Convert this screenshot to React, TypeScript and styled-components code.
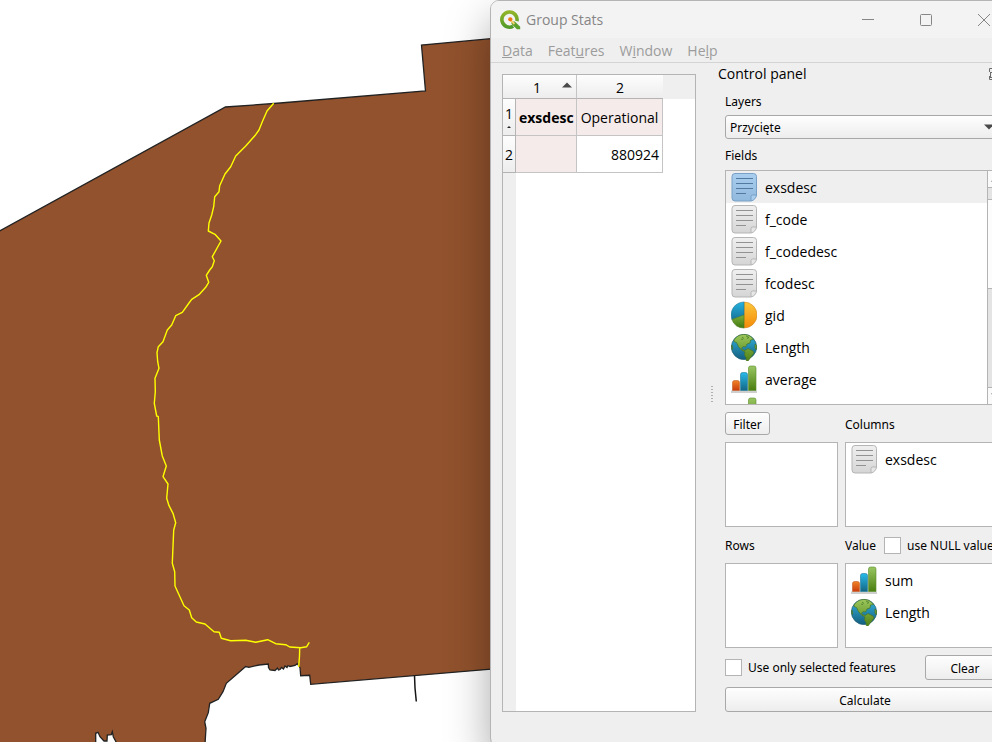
import React from "react";
import styled, { createGlobalStyle, css } from "styled-components";

const GlobalStyle = createGlobalStyle`
  *, *::before, *::after { box-sizing: border-box; }
  body {
    margin: 0;
    overflow: hidden;
    background: #fff;
    color: #000;
    font-family: "Open Sans", "Noto Sans", sans-serif;
    font-size: 14px;
    line-height: 20px;
  }
  ul { list-style: none; margin: 0; padding: 0; }
  button, select, input { font: inherit; color: inherit; margin: 0; }
`;

const frame = "1px solid #b4b4b4";

const smallText = css`
  font-family: "Noto Sans", "Open Sans", sans-serif;
  font-size: 12px;
  line-height: 16px;
`;

const raised = css`
  border: 1px solid #a8a8a8;
  border-radius: 3px;
  background: linear-gradient(#fefefe, #ededed);
`;

const Desktop = styled.div`
  display: flex;
  height: 100vh;
  overflow: hidden;
`;

const MapPane = styled.main`
  flex: 1;
  min-width: 0;
  margin-right: -1px;
`;

const MapDrawing = styled.svg`
  display: block;
  width: 100%;
  height: 100%;
`;

const Dialog = styled.section`
  flex: 0 0 524px;
  z-index: 1;
  display: flex;
  flex-direction: column;
  margin: 0 -22px -5px 0;
  border: 1px solid #b4b4b4;
  border-radius: 9px;
  overflow: hidden;
  background: #efefef;
  box-shadow: 0 20px 44px rgba(0, 0, 0, 0.34);
`;

const TitleBar = styled.header`
  display: flex;
  align-items: center;
  height: 37px;
  padding-left: 9px;
  gap: 5px;
  background: #f3f3f3;
  color: #868686;
`;

const Title = styled.h1`
  flex: 1;
  margin: 0;
  font-size: 14px;
  font-weight: 400;
`;

const WindowControls = styled.div`
  display: flex;
`;

const WindowButton = styled.button`
  display: grid;
  place-items: center;
  width: 58px;
  height: 36px;
  padding: 0;
  border: 0;
  background: none;
`;

const MenuBar = styled.nav`
  display: flex;
  gap: 15px;
  height: 25px;
  padding: 2px 11px 0;
  border-bottom: 1px solid #d4d4d4;
`;

const MenuItem = styled.button`
  padding: 0;
  border: 0;
  background: none;
  color: #9c9c9c;
`;

const Body = styled.div`
  flex: 1;
  min-height: 0;
  display: flex;
  padding-bottom: 34px;
`;

const ResultFrame = styled.div`
  flex: 0 0 194px;
  margin: 11px 0 0 11px;
  border: ${frame};
  background: linear-gradient(#efefef, #efefef) 0 0 / 13px 100% no-repeat,
    linear-gradient(#efefef, #efefef) 0 0 / 100% 24px no-repeat, #fff;
`;

const ResultTable = styled.table`
  table-layout: fixed;
  width: 160px;
  border-collapse: separate;
  border-spacing: 0;
`;

const Col = styled.col<{ $w: number }>`
  width: ${(p) => p.$w}px;
`;

const HeadCell = styled.th`
  height: 24px;
  padding: 2px 0 0;
  border-right: 1px solid #c4c4c4;
  border-bottom: 1px solid #b4b4b4;
  background: linear-gradient(#fdfdfd, #ededed);
  font-weight: 400;
  &:first-child, &:last-child { border-right: 0; }
`;

const SortHead = styled.div`
  display: grid;
  grid-template-columns: 1fr 18px;
  align-items: center;
  svg { justify-self: center; margin-bottom: 6px; }
`;

const RowHead = styled.th`
  height: 37px;
  padding: 2px 0 0;
  border-right: 1px solid #b4b4b4;
  border-bottom: 1px solid #b4b4b4;
  background: linear-gradient(#fdfdfd, #ededed);
  font-weight: 400;
  line-height: 20px;
`;

const RowSort = styled.svg`
  display: block;
  margin: 2px auto 4px;
`;

const Cell = styled.td<{ $tint?: boolean; $bold?: boolean; $right?: boolean }>`
  height: 37px;
  padding: 2px 3px 0;
  border-right: 1px solid #c4c4c4;
  border-bottom: 1px solid #c4c4c4;
  background: ${(p) => (p.$tint ? "#f5ebea" : "#fff")};
  font-weight: ${(p) => (p.$bold ? 700 : 400)};
  text-align: ${(p) => (p.$right ? "right" : "center")};
  white-space: nowrap;
`;

const Splitter = styled.div`
  flex: 0 0 22px;
  display: flex;
  justify-content: flex-end;
  align-items: center;
  padding: 14px 5px 0 0;
`;

const Dock = styled.aside`
  flex: 1;
  min-width: 0;
  display: flex;
  flex-direction: column;
`;

const DockTitle = styled.div`
  display: flex;
  justify-content: space-between;
  align-items: center;
  height: 22px;
  padding-right: 12px;
`;

const DockHeading = styled.h2`
  margin: 0;
  font-size: 14px;
  font-weight: 400;
`;

const Controls = styled.form`
  display: flex;
  flex-direction: column;
  padding: 0 8px 0 7px;
  ${smallText}
`;

const FieldLabel = styled.label`
  display: block;
  margin: 10px 0 5px;
`;

const ListLabel = styled.span`
  display: block;
  margin: 9px 0 6px;
`;

const SelectBox = styled.div`
  display: grid;
  align-items: center;
  > * { grid-area: 1 / 1; }
  svg { justify-self: end; margin-right: 11px; pointer-events: none; }
`;

const LayerSelect = styled.select`
  ${raised}
  appearance: none;
  height: 24px;
  padding: 2px 4px 0;
`;

const FieldsFrame = styled.div`
  display: flex;
  height: 235px;
  border: ${frame};
  background: #fff;
`;

const FieldList = styled.ul`
  flex: 1;
  overflow: hidden;
`;

const ListItem = styled.li<{ $selected?: boolean }>`
  display: flex;
  align-items: center;
  gap: 8px;
  height: 32px;
  padding-left: 5px;
  background: ${(p) => (p.$selected ? "#efefef" : "transparent")};
  font-family: "Open Sans", "Noto Sans", sans-serif;
  font-size: 14px;
  line-height: 20px;
  svg { flex: none; }
`;

const Caption = styled.span`
  padding-top: 2px;
`;

const ScrollBar = styled.div`
  flex: 0 0 17px;
  display: flex;
  flex-direction: column;
  border-left: 1px solid #b4b4b4;
  background: #e4e4e4;
`;

const ScrollArrow = styled.span`
  flex: 0 0 16px;
  display: grid;
  place-items: center;
  background: #fafafa;
`;

const ScrollTrack = styled.div`
  flex: 1;
  padding-top: 11px;
  border: solid #b4b4b4;
  border-width: 1px 0;
`;

const ScrollThumb = styled.div`
  height: 90px;
  border: solid #b4b4b4;
  border-width: 1px 0;
  background: #fcfcfc;
`;

const DropGrid = styled.div`
  display: grid;
  grid-template-columns: 113px 1fr;
  column-gap: 7px;
`;

const DropHead = styled.div<{ $h: number }>`
  display: flex;
  align-items: center;
  gap: 8px;
  height: ${(p) => p.$h}px;
  white-space: nowrap;
`;

const DropList = styled.ul`
  height: 85px;
  border: ${frame};
  background: #fff;
`;

const Button = styled.button<{ $w?: number; $h: number }>`
  ${raised}
  width: ${(p) => (p.$w ? `${p.$w}px` : "100%")};
  height: ${(p) => p.$h}px;
  padding: 2px 0 0;
`;

const CheckLabel = styled.label`
  display: flex;
  align-items: center;
  gap: 6px;
`;

const Check = styled.input`
  appearance: none;
  flex: none;
  width: 17px;
  height: 17px;
  border: 1px solid #b4b4b4;
  background: #fff;
`;

const ActionRow = styled.div`
  display: flex;
  justify-content: space-between;
  align-items: center;
  margin: 7px 0;
`;

function Arrow({ up }: { up?: boolean }) {
  return (
    <svg width="10" height="6" viewBox="0 0 10 6" aria-hidden="true">
      <path d={up ? "M0 5.5 5 .5l5 5z" : "M0 .5h10l-5 5z"} fill="#4a4a4a" />
    </svg>
  );
}

function Logo() {
  return (
    <svg width="21" height="20" viewBox="0 0 21 20" aria-hidden="true">
      <defs>
        <linearGradient id="logo" x2="0" y2="1">
          <stop offset="0" stopColor="#91b52a" />
          <stop offset="1" stopColor="#529b2b" />
        </linearGradient>
      </defs>
      <path
        d="M13.2 16.2A7.600 7.600 0 1 1 16.900 11.200"
        fill="none"
        stroke="url(#logo)"
        strokeWidth="3.600"
      />
      <path d="M11.500 11.500h3.300l5.400 5.300v2.400h-3.300l-5.400-5.200z" fill="#5c9f2b" />
      <path d="m10.800 10.300 3.700 3.700" stroke="#f7d06c" strokeWidth="1.800" />
      <circle cx="10.300" cy="9.300" r="2.100" fill="#ee7913" />
    </svg>
  );
}

function PageIcon({ blue }: { blue?: boolean }) {
  const id = blue ? "page-blue" : "page-grey";
  const edge = blue ? "#78a0c6" : "#b5b5b5";
  return (
    <svg width="26" height="30" viewBox="0 0 26 30" aria-hidden="true">
      <defs>
        <linearGradient id={id} x2="0" y2="1">
          <stop offset="0" stopColor={blue ? "#a9ceee" : "#f0f0f0"} />
          <stop offset="1" stopColor={blue ? "#91b9dd" : "#d5d5d5"} />
        </linearGradient>
      </defs>
      <path
        d="M4 1.500h18.500a3 3 0 0 1 3 3V23l-5.500 6H4a3 3 0 0 1-3-3V4.500a3 3 0 0 1 3-3z"
        fill={`url(#${id})`}
        stroke={edge}
      />
      <path
        d="M20 29v-4.500a1.500 1.500 0 0 1 1.500-1.500h4c0 2.500-2.500 5.500-5.500 6z"
        fill={blue ? "#a9ceee" : "#e6e6e6"}
        stroke={edge}
      />
      <path
        d="M5 6.500h17M5 11.500h17M5 16.500h17M5 21.500h10"
        stroke={blue ? "#52799f" : "#929292"}
      />
    </svg>
  );
}

function PieIcon() {
  return (
    <svg width="26" height="28" viewBox="0 0 26 28" aria-hidden="true">
      <defs>
        <linearGradient id="pie-o" x2="0" y2="1">
          <stop offset="0" stopColor="#fbc73c" />
          <stop offset="1" stopColor="#f58a07" />
        </linearGradient>
        <linearGradient id="pie-b" x2="0" y2="1">
          <stop offset="0" stopColor="#25b3e0" />
          <stop offset="1" stopColor="#16739a" />
        </linearGradient>
        <linearGradient id="pie-g" x2="0" y2="1">
          <stop offset="0" stopColor="#7eaf3c" />
          <stop offset="1" stopColor="#41780f" />
        </linearGradient>
      </defs>
      <path d="M13 1a13 13 0 0 1 0 26z" fill="url(#pie-o)" stroke="#d08a25" strokeWidth=".6" />
      <path d="M13 14 .9 18.500A13 13 0 0 1 13 1z" fill="url(#pie-b)" stroke="#1d7596" strokeWidth=".6" />
      <path d="M13 14v13A13 13 0 0 1 .9 18.500z" fill="url(#pie-g)" stroke="#4c7a22" strokeWidth=".6" />
    </svg>
  );
}

function GlobeIcon() {
  return (
    <svg width="26" height="28" viewBox="0 0 26 28" aria-hidden="true">
      <defs>
        <linearGradient id="sea" x2="0" y2="1">
          <stop offset="0" stopColor="#35b3dd" />
          <stop offset="1" stopColor="#125f7f" />
        </linearGradient>
        <linearGradient id="land" x2="0" y2="1">
          <stop offset="0" stopColor="#9cc75c" />
          <stop offset="1" stopColor="#4d8013" />
        </linearGradient>
      </defs>
      <circle cx="13" cy="14" r="12.600" fill="url(#sea)" stroke="#235f73" strokeWidth=".7" />
      <path
        d="M3 7C6 2.500 10 1.300 14 1.500c4 .2 7 2.500 8.500 5l-3 .5-.5 3-3 1-1.500 3-2-.5-2 1.500 1 1.500 2.500 1 3-2 5 2.500 1 2-3 4-3 4-1.500.5-.5-4-1.500-2.500.5-3-3.500-2-3-3.500-2-4L3 8.500zM24 11l1.500 1.500v4l-1.500-1zM.7 12l1 3-.7 1.500z"
        fill="url(#land)"
        stroke="#477426"
        strokeWidth=".7"
      />
      <path d="m11 4 2 1.500M15 3l3 1.500-2 1M10 6l2 .5" stroke="#588a30" fill="none" />
    </svg>
  );
}

function BarsIcon() {
  return (
    <svg width="26" height="28" viewBox="0 0 26 28" aria-hidden="true">
      <defs>
        <linearGradient id="bar-r" x2="0" y2="1">
          <stop offset="0" stopColor="#f18427" />
          <stop offset="1" stopColor="#c93c0d" />
        </linearGradient>
        <linearGradient id="bar-b" x2="0" y2="1">
          <stop offset="0" stopColor="#27bbe9" />
          <stop offset="1" stopColor="#146685" />
        </linearGradient>
        <linearGradient id="bar-g" x2="0" y2="1">
          <stop offset="0" stopColor="#99c662" />
          <stop offset="1" stopColor="#4a7e10" />
        </linearGradient>
      </defs>
      <path d="M0 25.500h26V28H0z" fill="#cfcfcf" />
      <path d="M1.500 25.500v-8q0-2 2-2h3q2 0 2 2v8z" fill="url(#bar-r)" stroke="#c05c26" strokeWidth=".6" />
      <path d="M9.500 25.500V9.500q0-2 2-2h3q2 0 2 2v16z" fill="url(#bar-b)" stroke="#1b7798" strokeWidth=".6" />
      <path d="M17.500 25.500V3q0-2 2-2h3.500q2 0 2 2v22.500z" fill="url(#bar-g)" stroke="#598b29" strokeWidth=".6" />
    </svg>
  );
}

type IconKind = "page" | "page-blue" | "pie" | "globe" | "bars";

function FieldIcon({ kind }: { kind: IconKind }) {
  if (kind === "pie") return <PieIcon />;
  if (kind === "globe") return <GlobeIcon />;
  if (kind === "bars") return <BarsIcon />;
  return <PageIcon blue={kind === "page-blue"} />;
}

function FieldItem({ icon, name, selected }: { icon: IconKind; name: string; selected?: boolean }) {
  return (
    <ListItem $selected={selected}>
      <FieldIcon kind={icon} />
      <Caption>{name}</Caption>
    </ListItem>
  );
}

const fields: { name: string; icon: IconKind }[] = [
  { name: "exsdesc", icon: "page-blue" },
  { name: "f_code", icon: "page" },
  { name: "f_codedesc", icon: "page" },
  { name: "fcodesc", icon: "page" },
  { name: "gid", icon: "pie" },
  { name: "Length", icon: "globe" },
  { name: "average", icon: "bars" },
  { name: "", icon: "bars" },
];

const menus = [
  ["", "D", "ata"],
  ["Feat", "u", "res"],
  ["W", "i", "ndow"],
  ["He", "l", "p"],
];

function MapView() {
  return (
    <MapDrawing viewBox="0 0 492 742" preserveAspectRatio="xMaxYMin slice" role="img" aria-label="Map">
      <path
        d="M-2 232.500 226.500 107 275 103.500 426.500 91 422.500 45 494 38.500V669L311.700 684.300 310.700 675.300 301.700 675.700 301 667.700 298.300 663.700 296 665.500 291 666.500 289 665.500 288 667.500 286 666 284.500 669 282.500 667.500 281 669.500 279.500 670 278.500 668 276 670.500 271 670 269.500 667.500 269.300 664 260 665 250 667.300 246.700 666.500 227.300 683.300 224 691.700 219.300 699.300 210.700 703.300 209.300 712.700 205.700 721.700 207 728.300 206 744H118L116.700 741.300 114.300 736.700 113.300 731.700 112.300 734.700 108.300 735 108 741H105L101 736.700 99 732.300 96.700 733.300V744H-2z"
        fill="#91522d"
        stroke="#222"
        strokeWidth="1.300"
      />
      <path d="M415.500 675.500 416 688l1.300 13.500" fill="none" stroke="#161616" strokeWidth="1.500" />
      <path
        d="M274.700 103.300 268 111 263.300 121.700 260 130 256.700 134.700 246.700 146 236.700 156 231.700 166.700 226 174 220.700 185.700 220 191.700 215.700 196.700 214.700 206.700 212.700 215 210 223 209.300 231 216 234.300 222 241 213.300 256.700 215.300 260.700 213.300 266.700 210.700 270 207.300 275.300 209.700 282.300 206.700 287.300 200 294.700 192.700 299.300 190 303 183.300 312.300 176.700 315.700 172.700 325 168.300 330 164 341.700 159.300 346.700 158 352.700 158.700 361.700 160 368.300 156 378.300 156.300 391.700 155.300 403.300 157.700 416 159.300 416.700 160.300 440 163.300 456 167.300 466 164 476.700 169 484 167.700 498.300 170 505.700 174 513.300 176.700 522.700 174.700 530 173.300 563.300 175.700 571.700 176 586 185 605.700 190.300 610 192.700 617.700 197.300 622 206 624 215 631.700 220.300 632.300 222.300 638.300 231.700 640.700 246.700 640.300 256.700 642.300 268.700 639.700 276.700 643.700 286.700 644.700 290.700 647 301.700 647.700 307.700 646.700 310.300 642.300M300.700 647.700 300.500 656 299.700 667"
        fill="none"
        stroke="#ffff00"
        strokeWidth="1.400"
        strokeLinejoin="round"
      />
    </MapDrawing>
  );
}

export default function App() {
  return (
    <>
      <GlobalStyle />
      <Desktop>
        <MapPane>
          <MapView />
        </MapPane>
        <Dialog aria-label="Group Stats">
          <TitleBar>
            <Logo />
            <Title>Group Stats</Title>
            <WindowControls>
              <WindowButton aria-label="Minimize">
                <svg width="12" height="12"><path d="M0 5.500h12" stroke="#868686" /></svg>
              </WindowButton>
              <WindowButton aria-label="Maximize">
                <svg width="12" height="12"><rect x=".5" y=".5" width="11" height="11" rx="1" fill="none" stroke="#868686" /></svg>
              </WindowButton>
              <WindowButton aria-label="Close">
                <svg width="12" height="12"><path d="m0 0 12 12M12 0 0 12" stroke="#868686" /></svg>
              </WindowButton>
            </WindowControls>
          </TitleBar>
          <MenuBar>
            {menus.map(([before, key, after]) => (
              <MenuItem key={before + key}>
                {before}<u>{key}</u>{after}
              </MenuItem>
            ))}
          </MenuBar>
          <Body>
            <ResultFrame>
              <ResultTable>
                <colgroup>
                  <Col $w={13} />
                  <Col $w={61} />
                  <Col $w={86} />
                </colgroup>
                <thead>
                  <tr>
                    <HeadCell aria-label="Row" />
                    <HeadCell scope="col">
                      <SortHead><span>1</span><Arrow up /></SortHead>
                    </HeadCell>
                    <HeadCell scope="col">2</HeadCell>
                  </tr>
                </thead>
                <tbody>
                  <tr>
                    <RowHead scope="row">
                      1
                      <RowSort width="4" height="2" aria-hidden="true">
                        <path d="M0 2 2 0l2 2z" fill="#222" />
                      </RowSort>
                    </RowHead>
                    <Cell $tint $bold>exsdesc</Cell>
                    <Cell $tint>Operational</Cell>
                  </tr>
                  <tr>
                    <RowHead scope="row">2</RowHead>
                    <Cell $tint />
                    <Cell $right>880924</Cell>
                  </tr>
                </tbody>
              </ResultTable>
            </ResultFrame>
            <Splitter>
              <svg width="2" height="17" aria-hidden="true">
                <path d="M1 0v17" stroke="#b0b0b0" strokeWidth="2" strokeDasharray="1 2" />
              </svg>
            </Splitter>
            <Dock>
              <DockTitle>
                <DockHeading>Control panel</DockHeading>
                <svg width="12" height="12" viewBox="0 0 12 12" fill="none" stroke="#6c6c6c" aria-hidden="true">
                  <path d="M.5 4V.5h11v11H.5V8" />
                  <rect x="1.500" y="4.500" width="5" height="5" />
                </svg>
              </DockTitle>
              <Controls onSubmit={(e) => e.preventDefault()}>
                <FieldLabel htmlFor="layer">Layers</FieldLabel>
                <SelectBox>
                  <LayerSelect id="layer"><option>Przycięte</option></LayerSelect>
                  <Arrow />
                </SelectBox>
                <ListLabel id="fields-label">Fields</ListLabel>
                <FieldsFrame>
                  <FieldList aria-labelledby="fields-label">
                    {fields.map((f, i) => (
                      <FieldItem key={i} icon={f.icon} name={f.name} selected={i === 0} />
                    ))}
                  </FieldList>
                  <ScrollBar aria-hidden="true">
                    <ScrollArrow><Arrow up /></ScrollArrow>
                    <ScrollTrack><ScrollThumb /></ScrollTrack>
                    <ScrollArrow><Arrow /></ScrollArrow>
                  </ScrollBar>
                </FieldsFrame>
                <DropGrid>
                  <DropHead $h={37}><Button type="button" $w={45} $h={23}>Filter</Button></DropHead>
                  <DropHead $h={37}><Caption>Columns</Caption></DropHead>
                  <DropList aria-label="Filter" />
                  <DropList aria-label="Columns">
                    <FieldItem icon="page" name="exsdesc" />
                  </DropList>
                  <DropHead $h={36}><Caption>Rows</Caption></DropHead>
                  <DropHead $h={36}>
                    <Caption>Value</Caption>
                    <CheckLabel><Check type="checkbox" /><Caption>use NULL values</Caption></CheckLabel>
                  </DropHead>
                  <DropList aria-label="Rows" />
                  <DropList aria-label="Value">
                    <FieldItem icon="bars" name="sum" />
                    <FieldItem icon="globe" name="Length" />
                  </DropList>
                </DropGrid>
                <ActionRow>
                  <CheckLabel><Check type="checkbox" />Use only selected features</CheckLabel>
                  <Button type="button" $w={80} $h={25}>Clear</Button>
                </ActionRow>
                <Button type="submit" $h={25}>Calculate</Button>
              </Controls>
            </Dock>
          </Body>
        </Dialog>
      </Desktop>
    </>
  );
}
